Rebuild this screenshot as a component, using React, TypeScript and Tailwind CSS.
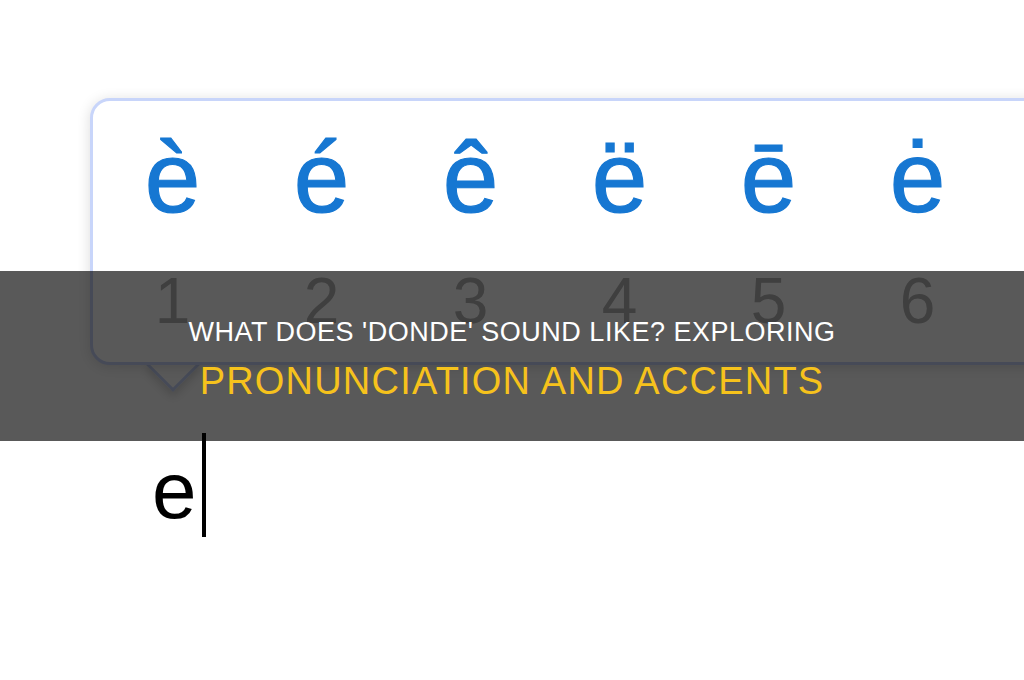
const LETTERS = ["è", "é", "ê", "ë", "ē", "ė"];

export default function App() {
  return (
    <div className="relative h-[680px] w-[1024px] overflow-hidden bg-white font-['Liberation_Sans',Arial,sans-serif]">
      {/* text being typed */}
      <div className="flex items-start pl-[152px] pt-[451px]">
        <span className="text-[80px] leading-none text-black">e</span>
        <span className="ml-[5px] -mt-[18px] h-[104px] w-[4px] bg-black" />
      </div>

      {/* accent picker popover */}
      <div className="absolute left-[90px] top-[98px] w-[980px]">
        <div className="relative z-10 h-[267px] rounded-[20px] border-[3px] border-[#c8d5fa] bg-white px-[5px] pt-[26px] shadow-[0_2px_14px_rgba(0,0,0,0.14)]">
          <div className="grid grid-cols-[repeat(6,149px)] text-center">
            {LETTERS.map((l) => (
              <span
                key={l}
                className="text-[100px] leading-none text-[#1677d2] [-webkit-text-stroke:1.2px_#1677d2]"
              >
                {l}
              </span>
            ))}
          </div>
          <div className="mt-[42px] grid grid-cols-[repeat(6,149px)] text-center">
            {LETTERS.map((l, i) => (
              <span key={l} className="text-[64px] leading-none text-[#b4b4b4]">
                {i + 1}
              </span>
            ))}
          </div>
        </div>
        <div className="absolute left-[64px] top-[248px] h-[38px] w-[38px] rotate-45 border-b-[3px] border-r-[3px] border-[#c8d5fa] bg-white shadow-[4px_4px_10px_rgba(0,0,0,0.16)]" />
        <div className="absolute left-[55px] top-[240px] z-20 h-[22px] w-[56px] bg-white" />
      </div>

      {/* title banner */}
      <div className="absolute inset-x-0 top-[271px] z-30 flex h-[170px] flex-col items-center bg-[rgba(0,0,0,0.65)] pt-[48px]">
        <h1 className="text-[27px] leading-none tracking-[0.5px] text-white">
          WHAT DOES 'DONDE' SOUND LIKE? EXPLORING
        </h1>
        <h2 className="mt-[16px] text-[38px] leading-none tracking-[1.2px] text-[#f6c21c]">
          PRONUNCIATION AND ACCENTS
        </h2>
      </div>
    </div>
  );
}
